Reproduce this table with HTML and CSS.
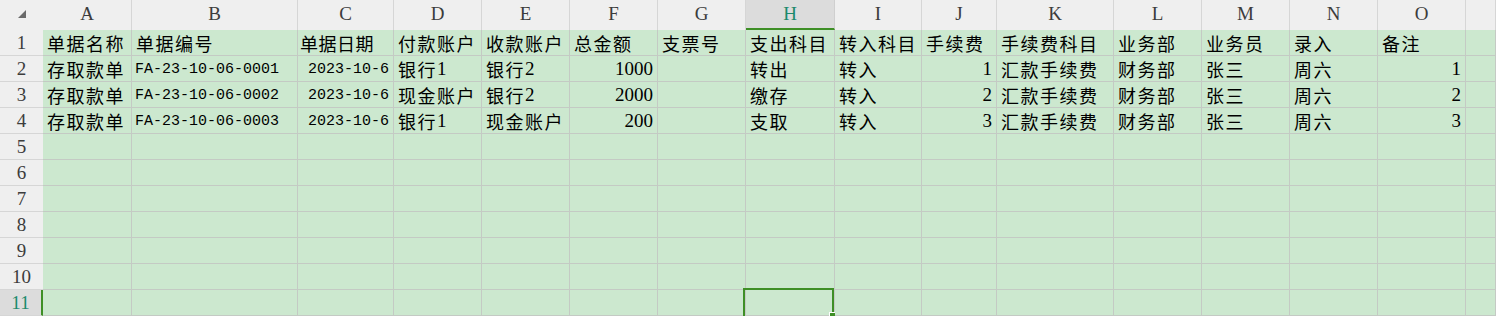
FILE: index.html
```html
<!DOCTYPE html>
<html lang="zh">
<head>
<meta charset="utf-8">
<title>Sheet</title>
<link rel="stylesheet" href="styles.css">
</head>
<body>
<div class="sheet">
  <div class="corner"><svg width="10" height="10" viewBox="0 0 10 10"><polygon points="9,1 9,9 1,9" fill="#6a6a6a"/></svg></div>
  <div class="ch">A</div><div class="ch">B</div><div class="ch">C</div><div class="ch">D</div><div class="ch">E</div><div class="ch">F</div><div class="ch">G</div><div class="ch sel">H</div><div class="ch">I</div><div class="ch">J</div><div class="ch">K</div><div class="ch">L</div><div class="ch">M</div><div class="ch">N</div><div class="ch">O</div><div class="ch"></div>

  <div class="rh">1</div>
  <div class="c">单据名称</div><div class="c">单据编号</div><div class="c t1">单据日期</div><div class="c">付款账户</div><div class="c">收款账户</div><div class="c">总金额</div><div class="c">支票号</div><div class="c">支出科目</div><div class="c">转入科目</div><div class="c">手续费</div><div class="c">手续费科目</div><div class="c">业务部</div><div class="c">业务员</div><div class="c">录入</div><div class="c">备注</div><div class="c"></div>

  <div class="rh">2</div>
  <div class="c">存取款单</div><div class="c mono">FA-23-10-06-0001</div><div class="c mono r">2023-10-6</div><div class="c">银行<span class="num">1</span></div><div class="c">银行<span class="num">2</span></div><div class="c num r">1000</div><div class="c"></div><div class="c">转出</div><div class="c">转入</div><div class="c num r">1</div><div class="c">汇款手续费</div><div class="c">财务部</div><div class="c">张三</div><div class="c">周六</div><div class="c num r">1</div><div class="c"></div>

  <div class="rh">3</div>
  <div class="c">存取款单</div><div class="c mono">FA-23-10-06-0002</div><div class="c mono r">2023-10-6</div><div class="c">现金账户</div><div class="c">银行<span class="num">2</span></div><div class="c num r">2000</div><div class="c"></div><div class="c">缴存</div><div class="c">转入</div><div class="c num r">2</div><div class="c">汇款手续费</div><div class="c">财务部</div><div class="c">张三</div><div class="c">周六</div><div class="c num r">2</div><div class="c"></div>

  <div class="rh">4</div>
  <div class="c">存取款单</div><div class="c mono">FA-23-10-06-0003</div><div class="c mono r">2023-10-6</div><div class="c">银行<span class="num">1</span></div><div class="c">现金账户</div><div class="c num r">200</div><div class="c"></div><div class="c">支取</div><div class="c">转入</div><div class="c num r">3</div><div class="c">汇款手续费</div><div class="c">财务部</div><div class="c">张三</div><div class="c">周六</div><div class="c num r">3</div><div class="c"></div>

  <div class="rh">5</div>
  <div class="c"></div><div class="c"></div><div class="c"></div><div class="c"></div><div class="c"></div><div class="c"></div><div class="c"></div><div class="c"></div><div class="c"></div><div class="c"></div><div class="c"></div><div class="c"></div><div class="c"></div><div class="c"></div><div class="c"></div><div class="c"></div>
  <div class="rh">6</div>
  <div class="c"></div><div class="c"></div><div class="c"></div><div class="c"></div><div class="c"></div><div class="c"></div><div class="c"></div><div class="c"></div><div class="c"></div><div class="c"></div><div class="c"></div><div class="c"></div><div class="c"></div><div class="c"></div><div class="c"></div><div class="c"></div>
  <div class="rh">7</div>
  <div class="c"></div><div class="c"></div><div class="c"></div><div class="c"></div><div class="c"></div><div class="c"></div><div class="c"></div><div class="c"></div><div class="c"></div><div class="c"></div><div class="c"></div><div class="c"></div><div class="c"></div><div class="c"></div><div class="c"></div><div class="c"></div>
  <div class="rh">8</div>
  <div class="c"></div><div class="c"></div><div class="c"></div><div class="c"></div><div class="c"></div><div class="c"></div><div class="c"></div><div class="c"></div><div class="c"></div><div class="c"></div><div class="c"></div><div class="c"></div><div class="c"></div><div class="c"></div><div class="c"></div><div class="c"></div>
  <div class="rh">9</div>
  <div class="c"></div><div class="c"></div><div class="c"></div><div class="c"></div><div class="c"></div><div class="c"></div><div class="c"></div><div class="c"></div><div class="c"></div><div class="c"></div><div class="c"></div><div class="c"></div><div class="c"></div><div class="c"></div><div class="c"></div><div class="c"></div>
  <div class="rh">10</div>
  <div class="c"></div><div class="c"></div><div class="c"></div><div class="c"></div><div class="c"></div><div class="c"></div><div class="c"></div><div class="c"></div><div class="c"></div><div class="c"></div><div class="c"></div><div class="c"></div><div class="c"></div><div class="c"></div><div class="c"></div><div class="c"></div>
  <div class="rh sel">11</div>
  <div class="c"></div><div class="c"></div><div class="c"></div><div class="c"></div><div class="c"></div><div class="c"></div><div class="c"></div><div class="c active"><span class="selbox"><span class="handle"></span></span></div><div class="c"></div><div class="c"></div><div class="c"></div><div class="c"></div><div class="c"></div><div class="c"></div><div class="c"></div><div class="c"></div>
</div>
</body>
</html>
```

FILE: styles.css
```css
html, body {
  margin: 0;
  padding: 0;
  background: #cce8cf;
  overflow: hidden;
}
body {
  width: 1496px;
  height: 316px;
}
.sheet {
  display: grid;
  grid-template-columns: 43px 89px 166px 96px 88px 88px 88px 88px 89px 87px 75px 117px 88px 88px 88px 88px 30px;
  grid-template-rows: 30px;
  grid-auto-rows: 26px;
  width: 1496px;
  overflow: hidden;
  font-family: "Noto Sans CJK SC", "Liberation Serif", serif;
  font-size: 18px;
  color: #000;
}
.corner {
  background: #efefef;
  display: flex;
  align-items: center;
  justify-content: flex-start;
  padding: 0 0 2px 17px;
  box-sizing: border-box;
}
.ch {
  background: #efefef;
  border-right: 1px solid #d6d6d6;
  box-sizing: border-box;
  display: flex;
  align-items: center;
  justify-content: center;
  font-family: "Liberation Serif", serif;
  font-size: 19px;
  color: #3c3c3c;
  padding-bottom: 2px;
}
.ch.sel {
  background: #dcdcdc;
  color: #1d8a6c;
  border-bottom: 2px solid #3e8f26;
  border-right-color: #cfcfcf;
  padding-bottom: 0;
}
.rh {
  background: #efefef;
  border-bottom: 1px solid #d6d6d6;
  box-sizing: border-box;
  display: flex;
  align-items: center;
  justify-content: center;
  font-family: "Liberation Serif", serif;
  font-size: 19px;
  color: #3c3c3c;
}
.rh.sel {
  background: #dcdcdc;
  color: #1d8a6c;
  border-right: 2px solid #3e8f26;
}
.c {
  background: #cce8cf;
  border-right: 1px solid #c4cac4;
  border-bottom: 1px solid #c4cac4;
  box-sizing: border-box;
  padding: 0 3px 0 4px;
  display: flex;
  align-items: flex-end;
  white-space: nowrap;
  line-height: 24px;
  letter-spacing: 1.5px;
  position: relative;
}
.c.r {
  justify-content: flex-end;
  padding-right: 4px;
  letter-spacing: 0;
}
.num {
  font-family: "Liberation Serif", serif;
  font-size: 19px;
  letter-spacing: 0;
}
.mono {
  font-family: "Liberation Mono", monospace;
  font-size: 15px;
  letter-spacing: 0;
  padding-left: 3px;
  line-height: 23px;
}
.t1 {
  padding-left: 2px;
  letter-spacing: 0.5px;
}
.selbox {
  position: absolute;
  left: -3px;
  top: -2px;
  width: 91px;
  height: 30px;
  border: 2px solid #3e8f26;
  box-sizing: border-box;
}
.handle {
  position: absolute;
  right: -5px;
  bottom: -4px;
  width: 6px;
  height: 6px;
  background: #3e8f26;
  border: 1px solid #ffffff;
}
```
